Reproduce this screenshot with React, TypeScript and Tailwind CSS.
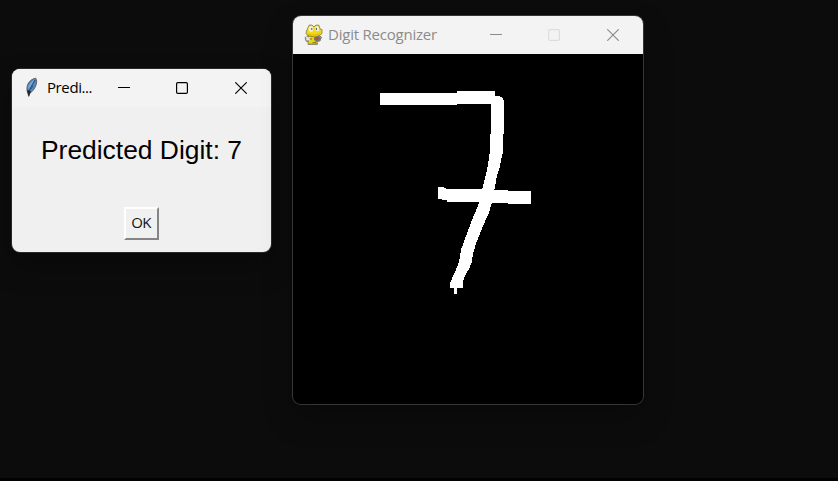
function Controls({ inactive = false }: { inactive?: boolean }) {
  const ink = inactive ? "#8b8b8b" : "#000000";
  const box = inactive ? "#dddddd" : "#000000";
  return (
    <div className="ml-auto flex h-full items-center">
      <svg className="mr-[46px] shrink-0" width="12" height="12" viewBox="0 0 12 12">
        <path d="M0 5.5H12" stroke={ink} />
      </svg>
      <svg className="mr-[47px] shrink-0" width="12" height="12" viewBox="0 0 12 12">
        <rect x="0.6" y="0.6" width="10.8" height="10.8" rx="1.2" fill="none" stroke={box} strokeWidth="1.2" />
      </svg>
      <svg className="shrink-0" width="12" height="12" viewBox="0 0 12 12">
        <path d="M0.3 0.3L11.7 11.7M11.7 0.3L0.3 11.7" stroke={ink} strokeWidth="1.15" />
      </svg>
    </div>
  );
}

function Feather() {
  return (
    <svg className="mb-[2px] shrink-0" width="14" height="21" viewBox="0 0 14 21">
      <path d="M10.7 1.2C7.5 1.6 4.1 4.2 2.8 7.2C1.7 10 1.6 13.2 2.8 16L3.7 19.4L4.8 16.2C7.7 14.5 10 11.3 11.2 7.5C11.9 5.2 11.8 2.8 10.7 1.2Z" fill="#5088c4" stroke="#626264" strokeWidth="1" />
      <path d="M9.7 2.4C6.5 4.2 3.7 7.4 2.9 11.8L5.9 9.5L8.5 4.5Z" fill="#76aae3" />
      <path d="M10.1 3L7.3 7.5L4.8 12.8L3.8 18.8" fill="none" stroke="#26364a" strokeWidth="0.8" />
      <path d="M2 13.2L3.7 19L6 14.8L4.3 13.2Z" fill="#252525" />
      <path d="M8 8.5L6 12" stroke="#315e92" strokeWidth="1.2" />
    </svg>
  );
}

function PygameSnake() {
  return (
    <svg className="mb-[2px] shrink-0" width="19" height="21" viewBox="0 0 19 21">
      <path d="M3 12L1 13.5L2 17L5 18.5L4 20.3H13.5L12.5 17.5L16 17L17.5 13L14 11Z" fill="#a3aaa1" stroke="#62635a" strokeWidth="0.7" />
      <path d="M4 13L8 11.5L12 13L11 17L13 18V20H4V17.5L6 16Z" fill="#e9d316" stroke="#6c611e" strokeWidth="0.5" />
      <path d="M4 3.5L5 1.2L8 1L10 3L12 1L15 1.3L16 5L18 5.5V9.5L15.5 11.5L11 13L5 12L2 9.8L2.5 7Z" fill="#f1d916" stroke="#77701d" strokeWidth="0.7" />
      <ellipse cx="7" cy="4.9" rx="2.4" ry="2.8" fill="#eeeee5" />
      <ellipse cx="13.2" cy="4.7" rx="2" ry="2.6" fill="#eeeee5" />
      <path d="M7.8 4V6M12.4 4V6" stroke="#555" strokeWidth="1" />
      <path d="M4 9.8L7 11H12L16 9.5" fill="none" stroke="#c5a70b" strokeWidth="0.7" />
      <path d="M1.8 12.5L6 16.5M2.5 16L6 13" stroke="#e7ece7" strokeWidth="1.4" />
      <path d="M10 13.5L15 12L17 14.5L14 17.5L10 16Z" fill="#747574" />
      <path d="M11.5 14.5H14.3" stroke="#d33a35" strokeWidth="1.8" />
      <path d="M7 14V16M8.5 18.7H12" stroke="#655d1c" strokeWidth="0.8" />
    </svg>
  );
}

export default function App() {
  return (
    <main className="relative h-[481px] w-[838px] overflow-hidden border-b-[3px] border-[#040101] bg-[#0c0c0c]">
      <section className="absolute left-[12px] top-[69px] flex h-[183px] w-[259px] flex-col overflow-hidden rounded-[8px] bg-[#f0f0f0] shadow-[0_0_0_1px_#292929,0_14px_30px_rgba(0,0,0,0.3)]">
        <header className="flex h-[38px] shrink-0 items-center bg-[#f3f3f3] pl-[13px] pr-[24px]">
          <Feather />
          <span className="mb-[2px] ml-[8px] whitespace-nowrap font-['Open_Sans',sans-serif] text-[15px] leading-[20px] tracking-[-0.4px] text-black">Predi...</span>
          <Controls />
        </header>
        <div className="flex flex-1 flex-col items-center pt-[28px]">
          <p className="whitespace-nowrap font-['Liberation_Sans',Arial,sans-serif] text-[26.4px] leading-[30px] text-black">Predicted Digit: 7</p>
          <button className="mt-[42px] flex h-[33px] w-[35px] items-center justify-center border-2 border-b-[#858585] border-l-white border-r-[#858585] border-t-white bg-[#f0f0f0] pb-[4px] pr-px font-['Open_Sans',sans-serif] text-[15px] leading-[20px] tracking-[-0.8px] text-[#151515]">OK</button>
        </div>
      </section>

      <section className="absolute left-[293px] top-[16px] flex h-[388px] w-[350px] flex-col overflow-hidden rounded-[8px] bg-black shadow-[0_0_0_1px_#353535,0_14px_30px_rgba(0,0,0,0.25)]">
        <header className="flex h-[38px] shrink-0 items-center bg-[#f3f3f3] pl-[11px] pr-[24px]">
          <PygameSnake />
          <span className="mb-[2px] ml-[5px] whitespace-nowrap font-['Open_Sans',sans-serif] text-[15px] leading-[20px] tracking-[-0.22px] text-[#8b8b8b]">Digit Recognizer</span>
          <Controls inactive />
        </header>
        <svg className="block shrink-0" width="350" height="350" viewBox="293.1 54 350 350" shapeRendering="crispEdges">
          <path d="M380.5 92.7H457V91.4H495.5V96.3H500L502 97L503 99L504.4 102V133L503.3 134V151L501 160L500 167L497 176L494.5 190H508V191.3H530.7V204H508V202.7H492L489 213L484 224L480 234L476 244L473 254L472 262L469 269L466 274L463 281V287.8H457V294H454.3V287.8H450.5V282L455 272L458 265L460 258L461 250L465 239L468 231L472 220L476 211L479.5 201.5H447V200.5L443 200L442 199H438V186.5H442L444 187.5L447 189H482.3L485 178L487 171L489 158L490.3 150V134L491.5 133V104H457V105.3H380.5Z" fill="white" />
        </svg>
      </section>
    </main>
  );
}
